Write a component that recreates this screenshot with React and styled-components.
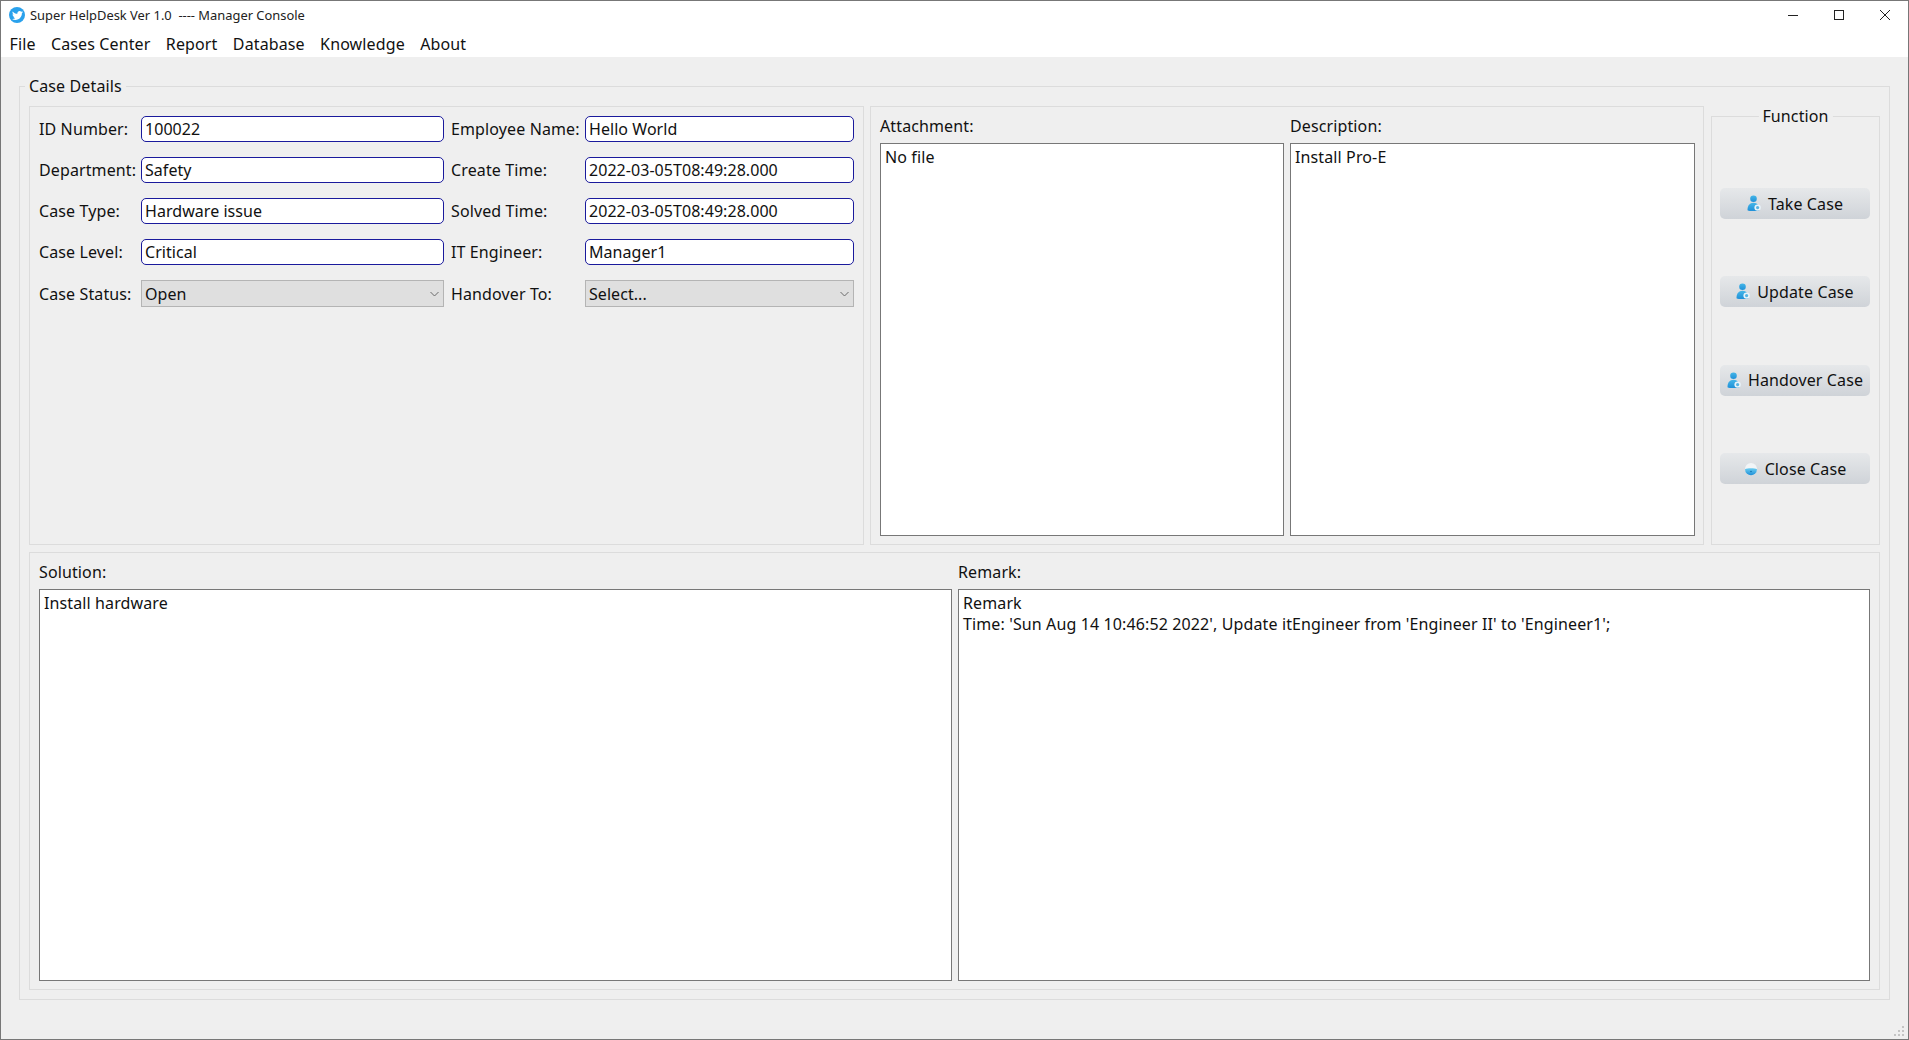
import React from "react"
import styled, { createGlobalStyle } from "styled-components"
import { FaTwitter } from "react-icons/fa"

const GlobalStyle = createGlobalStyle`
  html, body {
    margin: 0;
    padding: 0;
    background: #efefef;
  }
  * {
    box-sizing: border-box;
  }
`

const leftFields = [
  { label: "ID Number:", value: "100022" },
  { label: "Department:", value: "Safety" },
  { label: "Case Type:", value: "Hardware issue" },
  { label: "Case Level:", value: "Critical" },
]

const rightFields = [
  { label: "Employee Name:", value: "Hello World" },
  { label: "Create Time:", value: "2022-03-05T08:49:28.000" },
  { label: "Solved Time:", value: "2022-03-05T08:49:28.000" },
  { label: "IT Engineer:", value: "Manager1" },
]

const PersonIcon = ({ badge }) => (
  <svg width="14" height="17" viewBox="0 0 14 17">
    <defs>
      <linearGradient id={`person-${badge}`} x1="0" y1="0" x2="0" y2="1">
        <stop offset="0" stopColor="#45b6e8" />
        <stop offset="1" stopColor="#1f90d8" />
      </linearGradient>
    </defs>
    <circle cx="6.5" cy="3.8" r="3.3" fill={`url(#person-${badge})`} />
    <path d="M0.5 15.2c0-4.6 2.2-7.4 6-7.4s6 2.8 6 7.4c-2 1.2-10 1.2-12 0z" fill={`url(#person-${badge})`} />
    <circle cx="10.6" cy="12.6" r="3.2" fill="#e9f4fa" />
    <circle cx="10.6" cy="12.6" r="1.6" fill="#58b4e2" />
  </svg>
)

const LockIcon = () => (
  <svg width="14" height="14" viewBox="0 0 14 14">
    <defs>
      <linearGradient id="lock-body" x1="0" y1="0" x2="0" y2="1">
        <stop offset="0" stopColor="#6ccdf0" />
        <stop offset="1" stopColor="#1f8fd8" />
      </linearGradient>
    </defs>
    <circle cx="7" cy="7" r="6" fill="#f2f5f7" />
    <path d="M1 7.2a6 6 0 0 0 12 0c-2-1.2-10-1.2-12 0z" fill="url(#lock-body)" />
    <circle cx="7" cy="9.5" r="0.8" fill="#0f6fae" />
  </svg>
)

const actions = [
  { label: "Take Case", icon: <PersonIcon badge="take" /> },
  { label: "Update Case", icon: <PersonIcon badge="update" /> },
  { label: "Handover Case", icon: <PersonIcon badge="handover" /> },
  { label: "Close Case", icon: <LockIcon /> },
]

const menus = ["File", "Cases Center", "Report", "Database", "Knowledge", "About"]

const Chevron = () => (
  <svg width="9" height="6" viewBox="0 0 9 6">
    <path d="M0.5 1l4 4 4-4" fill="none" stroke="#6a6a6a" strokeWidth="1" />
  </svg>
)

const Field = ({ label, value, wide }) => (
  <FieldRow $wide={wide}>
    <FieldLabel>{label}</FieldLabel>
    <LineEdit>{value}</LineEdit>
  </FieldRow>
)

const Combo = ({ label, value, wide }) => (
  <FieldRow $wide={wide}>
    <FieldLabel>{label}</FieldLabel>
    <ComboBox>
      {value}
      <Chevron />
    </ComboBox>
  </FieldRow>
)

const App = () => {
  return (
    <Window>
      <GlobalStyle />
      <TitleBar>
        <AppLogo>
          <FaTwitter size={11} color="#fff" />
        </AppLogo>
        <WindowTitle>{"Super HelpDesk Ver 1.0  ---- Manager Console"}</WindowTitle>
        <WindowControls>
          <svg width="12" height="12" viewBox="0 0 12 12">
            <path d="M1 6.5h10" stroke="#222" strokeWidth="1" />
          </svg>
          <svg width="12" height="12" viewBox="0 0 12 12">
            <rect x="1.5" y="1.5" width="9" height="9" fill="none" stroke="#222" strokeWidth="1" />
          </svg>
          <svg width="12" height="12" viewBox="0 0 12 12">
            <path d="M1 1l10 10M11 1L1 11" stroke="#222" strokeWidth="1" />
          </svg>
        </WindowControls>
      </TitleBar>
      <MenuBar>
        {menus.map(menu => (
          <MenuItem key={menu}>{menu}</MenuItem>
        ))}
      </MenuBar>
      <Main>
        <CaseGroup>
          <GroupLegend>Case Details</GroupLegend>
          <TopRow>
            <Frame>
              <FieldGrid>
                <FieldColumn>
                  {leftFields.map(field => (
                    <Field key={field.label} {...field} />
                  ))}
                  <Combo label="Case Status:" value="Open" />
                </FieldColumn>
                <FieldColumn>
                  {rightFields.map(field => (
                    <Field key={field.label} wide {...field} />
                  ))}
                  <Combo label="Handover To:" value="Select..." wide />
                </FieldColumn>
              </FieldGrid>
            </Frame>
            <NotesFrame>
              <NotesColumn>
                <NoteLabel>Attachment:</NoteLabel>
                <TextBox>No file</TextBox>
              </NotesColumn>
              <NotesColumn>
                <NoteLabel>Description:</NoteLabel>
                <TextBox>Install Pro-E</TextBox>
              </NotesColumn>
            </NotesFrame>
            <FunctionFrame>
              <FunctionLegend>Function</FunctionLegend>
              {actions.map(action => (
                <ActionButton key={action.label}>
                  {action.icon}
                  {action.label}
                </ActionButton>
              ))}
            </FunctionFrame>
          </TopRow>
          <BottomFrame>
            <NotesColumn>
              <NoteLabel>Solution:</NoteLabel>
              <TextBox>Install hardware</TextBox>
            </NotesColumn>
            <NotesColumn>
              <NoteLabel>Remark:</NoteLabel>
              <TextBox>
                Remark
                <br />
                Time: 'Sun Aug 14 10:46:52 2022', Update itEngineer from 'Engineer II' to 'Engineer1';
              </TextBox>
            </NotesColumn>
          </BottomFrame>
        </CaseGroup>
        <SizeGrip width="12" height="12" viewBox="0 0 12 12" fill="#c4c4c4">
          <rect x="8" y="0" width="2" height="2" />
          <rect x="8" y="4" width="2" height="2" />
          <rect x="4" y="4" width="2" height="2" />
          <rect x="8" y="8" width="2" height="2" />
          <rect x="4" y="8" width="2" height="2" />
          <rect x="0" y="8" width="2" height="2" />
        </SizeGrip>
      </Main>
    </Window>
  )
}

const Window = styled.div`
  width: 1909px;
  height: 1040px;
  display: flex;
  flex-direction: column;
  border: 1px solid #777;
  overflow: hidden;
  background: #efefef;
  color: #111;
  font-family: "Noto Sans", "Liberation Sans", sans-serif;
  font-size: 16px;
  letter-spacing: 0.12px;
`

const TitleBar = styled.div`
  height: 29px;
  display: flex;
  align-items: center;
  padding: 0 0 1px 8px;
  background: #fff;
`

const AppLogo = styled.span`
  width: 16px;
  height: 16px;
  border-radius: 50%;
  background: #2aa1ec;
  display: flex;
  align-items: center;
  justify-content: center;
`

const WindowTitle = styled.span`
  margin-left: 5px;
  font-size: 12.9px;
  letter-spacing: 0;
  white-space: pre;
  color: #222;
`

const WindowControls = styled.div`
  margin-left: auto;
  display: flex;
  gap: 34px;
  padding-right: 17px;
`

const MenuBar = styled.div`
  height: 27px;
  display: flex;
  align-items: center;
  gap: 15.4px;
  padding-left: 8.5px;
  background: #fff;
`

const MenuItem = styled.span`
  font-size: 16px;
`

const Main = styled.div`
  position: relative;
  flex: 1;
  min-height: 0;
  padding: 29px 18px 39px;
`

const CaseGroup = styled.section`
  position: relative;
  height: 100%;
  display: flex;
  flex-direction: column;
  gap: 7px;
  padding: 19px 9px 9px;
  border: 1px solid #dcdcdc;
`

const GroupLegend = styled.span`
  position: absolute;
  top: -12px;
  left: 5px;
  padding: 0 4px;
  background: #efefef;
`

const TopRow = styled.div`
  height: 439px;
  display: grid;
  grid-template-columns: 835px 834px 1fr;
  column-gap: 6px;
`

const Frame = styled.div`
  border: 1px solid #dcdcdc;
`

const FieldGrid = styled.div`
  display: grid;
  grid-template-columns: 405px 403px;
  column-gap: 7px;
  padding: 9px 9px 0;
`

const FieldColumn = styled.div`
  display: flex;
  flex-direction: column;
  gap: 15px;
`

const FieldRow = styled.div`
  display: grid;
  grid-template-columns: ${({ $wide }) => ($wide ? "134px 269px" : "102px 303px")};
  align-items: center;
`

const FieldLabel = styled.span`
  white-space: nowrap;
`

const LineEdit = styled.div`
  height: 26px;
  display: flex;
  align-items: center;
  padding-left: 3px;
  background: #fff;
  border: 1px solid #1a1a9c;
  border-radius: 5px;
  letter-spacing: 0.05px;
`

const ComboBox = styled.div`
  height: 27px;
  display: flex;
  align-items: center;
  justify-content: space-between;
  padding: 0 4px 0 3px;
  background: #dfdfdf;
  border: 1px solid #b4b4b4;
  letter-spacing: 0.05px;
`

const NotesFrame = styled(Frame)`
  display: grid;
  grid-template-columns: 404px 405px;
  column-gap: 6px;
  padding: 0 8px 8px 9px;
`

const BottomFrame = styled(Frame)`
  flex: 1;
  min-height: 0;
  display: grid;
  grid-template-columns: 913px 912px;
  column-gap: 6px;
  padding: 0 9px 8px 9px;
`

const NotesColumn = styled.div`
  min-height: 0;
  display: flex;
  flex-direction: column;
`

const NoteLabel = styled.div`
  height: 36px;
  padding-top: 8px;
`

const TextBox = styled.div`
  flex: 1;
  padding: 3px 4px;
  background: #fff;
  border: 1px solid #777;
  line-height: 21px;
`

const FunctionFrame = styled(Frame)`
  position: relative;
  margin: 10px 0 0 1px;
  display: flex;
  flex-direction: column;
  gap: 57.4px;
  padding: 71px 9px 0 8px;
`

const FunctionLegend = styled.span`
  position: absolute;
  top: -12px;
  left: 50%;
  transform: translateX(-50%);
  padding: 0 4px;
  background: #efefef;
  white-space: nowrap;
`

const ActionButton = styled.div`
  height: 31px;
  display: flex;
  align-items: center;
  justify-content: center;
  gap: 7px;
  border-radius: 5px;
  background: linear-gradient(#e6e8ea, #cfd3d8);
`

const SizeGrip = styled.svg`
  position: absolute;
  right: 2px;
  bottom: 1px;
`

export default App
